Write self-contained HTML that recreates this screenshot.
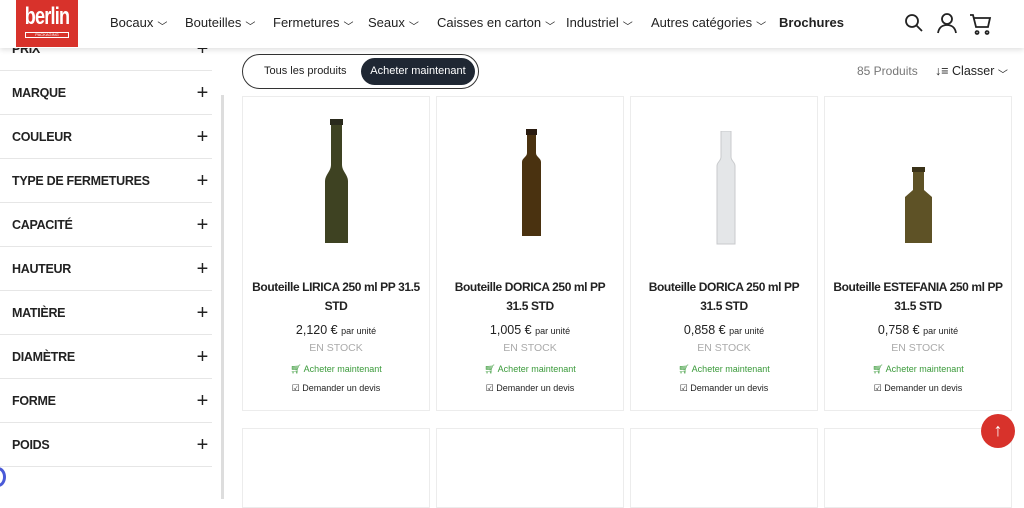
<!DOCTYPE html>
<html><head><meta charset="utf-8"><style>
*{margin:0;padding:0;box-sizing:border-box}
body{width:1024px;height:499px;overflow:hidden;background:#fff;font-family:"Liberation Sans",sans-serif;color:#222;position:relative}
.hdr{position:absolute;left:0;top:0;width:1024px;height:48px;background:#fff;box-shadow:0 2px 5px rgba(0,0,0,.12);z-index:5}
.logo{position:absolute;left:16px;top:0;width:62px;height:47px;background:#d8322b;color:#fff;text-align:center}
.logo b{display:block;font-size:24px;font-weight:bold;letter-spacing:-1px;line-height:24px;padding-top:5px;transform:scaleX(.75)}
.logo i{display:block;margin:3px auto 0;width:44px;height:6px;border:1px solid #fff;font-size:4px;font-style:normal;line-height:4px}
.nav{position:absolute;top:15px;font-size:13px;color:#222;white-space:nowrap}
.nav span{position:absolute}
.nav em{font-style:normal;font-size:10px;margin-left:4px;position:relative;top:3px}
.side{position:absolute;left:0;top:48px;width:212px}
.row{height:44px;border-bottom:1px solid #e6e6e6;position:relative;font-weight:bold;font-size:12.5px;padding-left:12px;line-height:44px;letter-spacing:-.3px;color:#222}
.row:after{content:"+";position:absolute;right:4px;top:0;font-weight:normal;font-size:20px}
.bar{position:absolute;left:221px;top:95px;width:3px;height:404px;background:#ddd}
.card{position:absolute;width:188px;height:315px;border:1px solid #ececec;top:96px;text-align:center}
.t{position:absolute;top:181px;left:4px;right:4px;font-weight:bold;font-size:12px;line-height:19px;letter-spacing:-.4px;white-space:nowrap}
.p{position:absolute;top:226px;width:100%;font-size:12.5px}
.p small{font-size:9px}
.s{position:absolute;top:245px;width:100%;font-size:10.5px;color:#aaa}
.a{position:absolute;top:267px;width:100%;font-size:9px;color:#3a9a3a}
.d{position:absolute;top:286px;width:100%;font-size:9px;color:#222}
.c2{position:absolute;width:188px;height:80px;border:1px solid #ececec;top:428px}
</style></head><body>
<div class="hdr">
<div class="logo"><b>berlin</b><i>PACKAGING</i></div>
<div class="nav">
<span style="left:110px">Bocaux<em>﹀</em></span>
<span style="left:185px">Bouteilles<em>﹀</em></span>
<span style="left:273px">Fermetures<em>﹀</em></span>
<span style="left:368px">Seaux<em>﹀</em></span>
<span style="left:437px">Caisses en carton<em>﹀</em></span>
<span style="left:566px">Industriel<em>﹀</em></span>
<span style="left:651px">Autres catégories<em>﹀</em></span>
<span style="left:779px;font-weight:bold">Brochures</span>
</div>
<svg style="position:absolute;left:904px;top:13px" width="90" height="22" fill="none" stroke="#222" stroke-width="1.8">
<circle cx="8" cy="8" r="6"/><path d="M12.5 12.5 18 18"/>
<circle cx="43" cy="6" r="5"/><path d="M34 20c1-6 5-8 9-8s8 2 9 8"/>
<path d="M66 2h3l3 12h12l2-9H70M73 18a1.5 1.5 0 1 0 .1 0M83 18a1.5 1.5 0 1 0 .1 0"/>
</svg>
</div>
<div class="side">
<div class="row" style="height:23px;line-height:2px">PRIX</div>
<div class="row">MARQUE</div><div class="row">COULEUR</div><div class="row">TYPE DE FERMETURES</div><div class="row">CAPACITÉ</div><div class="row">HAUTEUR</div><div class="row">MATIÈRE</div><div class="row">DIAMÈTRE</div><div class="row">FORME</div><div class="row">POIDS</div>
</div>
<div class="bar"></div>
<div style="position:absolute;left:-10px;top:467px;width:16px;height:20px;border:3px solid #4a5ad8;border-radius:50%"></div>
<div style="position:absolute;left:242px;top:54px;width:237px;height:35px;border:1px solid #333;border-radius:18px"></div>
<div style="position:absolute;left:264px;top:65px;font-size:11px">Tous les produits</div>
<div style="position:absolute;left:361px;top:58px;width:114px;height:27px;background:#1f2733;border-radius:14px;color:#fff;font-size:11px;line-height:27px;text-align:center">Acheter maintenant</div>
<div style="position:absolute;left:857px;top:64px;font-size:12px;color:#777">85 Produits</div>
<div style="position:absolute;left:935px;top:63px;font-size:12.5px;color:#222">↓≡ Classer <span style="font-size:10px;position:relative;top:3px">﹀</span></div>

<div class="card" style="left:242px"><svg style="position:absolute;left:78px;top:22px" width="34" height="130"><rect x="9" y="0" width="13" height="6" fill="#2a2a1c"/><path d="M10 6h11v40c0 6 6 10 6 16v62H4V62c0-6 6-10 6-16z" fill="#3e4222"/></svg>
<div class="t">Bouteille LIRICA 250 ml PP 31.5<br>STD</div><div class="p">2,120 € <small>par unité</small></div><div class="s">EN STOCK</div><div class="a">🛒︎ Acheter maintenant</div><div class="d">☑ Demander un devis</div></div>
<div class="card" style="left:436px"><svg style="position:absolute;left:79px;top:32px" width="34" height="110"><rect x="10" y="0" width="11" height="6" fill="#2a1c10"/><path d="M11 6h9v18c0 4 5 5 5 9v74H6V33c0-4 5-5 5-9z" fill="#4a3210"/></svg>
<div class="t">Bouteille DORICA 250 ml PP<br>31.5 STD</div><div class="p">1,005 € <small>par unité</small></div><div class="s">EN STOCK</div><div class="a">🛒︎ Acheter maintenant</div><div class="d">☑ Demander un devis</div></div>
<div class="card" style="left:630px"><svg style="position:absolute;left:79px;top:34px" width="34" height="115"><path d="M11 0h10v26c0 4 4 5 4 9v78H7V35c0-4 4-5 4-9z" fill="#e4e6e8" stroke="#c8cacc"/></svg>
<div class="t">Bouteille DORICA 250 ml PP<br>31.5 STD</div><div class="p">0,858 € <small>par unité</small></div><div class="s">EN STOCK</div><div class="a">🛒︎ Acheter maintenant</div><div class="d">☑ Demander un devis</div></div>
<div class="card" style="left:824px"><svg style="position:absolute;left:77px;top:70px" width="34" height="80"><rect x="10" y="0" width="13" height="5" fill="#3a3218"/><path d="M11 5h11v18l8 7v46H3V30l8-7z" fill="#5e5226"/></svg>
<div class="t">Bouteille ESTEFANIA 250 ml PP<br>31.5 STD</div><div class="p">0,758 € <small>par unité</small></div><div class="s">EN STOCK</div><div class="a">🛒︎ Acheter maintenant</div><div class="d">☑ Demander un devis</div></div>
<div class="c2" style="left:242px"></div><div class="c2" style="left:436px"></div><div class="c2" style="left:630px"></div><div class="c2" style="left:824px"></div>
<div style="position:absolute;left:981px;top:414px;width:34px;height:34px;border-radius:50%;background:#d8322b;color:#fff;text-align:center;line-height:32px;font-size:18px">↑</div>
</body></html>
